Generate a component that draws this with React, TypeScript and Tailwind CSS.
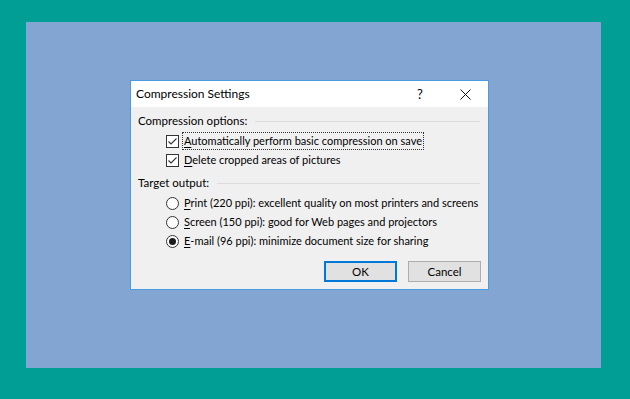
import React, { useState } from 'react';

const font = { fontFamily: 'Lato, "Noto Sans", "Liberation Sans", sans-serif' };

const Check: React.FC<{ checked: boolean }> = ({ checked }) => (
    <span className="w-[13px] h-[13px] border border-[#333] bg-white flex items-center justify-center shrink-0">
        {checked && (
            <svg width="11" height="11" viewBox="0 0 11 11">
                <path d="M1.5 5.5 L4 8 L9.5 2.5" fill="none" stroke="#333" strokeWidth="1.1" />
            </svg>
        )}
    </span>
);

const Radio: React.FC<{ checked: boolean }> = ({ checked }) => (
    <span className="w-[13px] h-[13px] rounded-full border border-[#333] bg-white flex items-center justify-center shrink-0">
        {checked && <span className="w-[7px] h-[7px] rounded-full bg-[#1a1a1a]" />}
    </span>
);

const GroupTitle: React.FC<{ label: string }> = ({ label }) => (
    <div className="flex items-center gap-[8px] pl-[7px] pr-[8px]">
        <span>{label}</span>
        <span className="flex-1 h-px bg-[#dcdcdc]" />
    </div>
);

const App: React.FC = () => {
    const [opts, setOpts] = useState({ auto: true, del: true });
    const [target, setTarget] = useState('email');

    const radios = [
        { id: 'print', key: 'P', rest: 'rint (220 ppi): excellent quality on most printers and screens' },
        { id: 'screen', key: 'S', rest: 'creen (150 ppi): good for Web pages and projectors' },
        { id: 'email', key: 'E', rest: '-mail (96 ppi): minimize document size for sharing' },
    ];

    return (
        <div className="w-[630px] h-[399px] bg-[#009e94] pt-[22px] pl-[26px]" style={font}>
            <div className="w-[575px] h-[346px] bg-[#82a5d2] pl-[104px] pt-[58px]">
                <div className="w-[359px] h-[210px] border border-[#4c9ae0] bg-[#f0f0f0] flex flex-col text-[11.5px] leading-[16px] text-black whitespace-nowrap">
                    {/* title bar */}
                    <div className="h-[26px] bg-white flex items-center shrink-0 text-[12px]">
                        <span className="pl-[5px] flex-1">Compression Settings</span>
                        <span className="w-[20px] text-center mr-[22px] text-[13px]">?</span>
                        <span className="w-[26px] flex justify-center mr-[10px]">
                            <svg width="11" height="11" viewBox="0 0 11 11">
                                <path d="M0.5 0.5 L10.5 10.5 M10.5 0.5 L0.5 10.5" stroke="#111" strokeWidth="1" />
                            </svg>
                        </span>
                    </div>

                    <div className="pt-[6px]">
                        <GroupTitle label="Compression options:" />
                        <div className="flex flex-col gap-[2px] pl-[35px] pt-[3px]">
                            <label className="flex items-center gap-[3px] cursor-default" onClick={() => setOpts(o => ({ ...o, auto: !o.auto }))}>
                                <Check checked={opts.auto} />
                                <span className="border border-dotted border-[#333] px-[1px] text-[11px]">
                                    <span className="underline underline-offset-2">A</span>utomatically perform basic compression on save
                                </span>
                            </label>
                            <label className="flex items-center gap-[3px] cursor-default text-[11px]" onClick={() => setOpts(o => ({ ...o, del: !o.del }))}>
                                <Check checked={opts.del} />
                                <span className="px-[2px]">
                                    <span className="underline underline-offset-2">D</span>elete cropped areas of pictures
                                </span>
                            </label>
                        </div>
                    </div>

                    <div className="pt-[7px]">
                        <GroupTitle label="Target output:" />
                        <div className="flex flex-col gap-[3px] pl-[35px] pt-[4px] text-[11px]">
                            {radios.map(r => (
                                <label key={r.id} className="flex items-center gap-[3px] cursor-default" onClick={() => setTarget(r.id)}>
                                    <Radio checked={target === r.id} />
                                    <span className="px-[2px]">
                                        <span className="underline underline-offset-2">{r.key}</span>{r.rest}
                                    </span>
                                </label>
                            ))}
                        </div>
                    </div>

                    <div className="flex justify-end gap-[11px] pr-[7px] pt-[12px] text-[11.5px]">
                        <button className="w-[73px] h-[21px] border-2 border-[#0078d7] bg-[#e1e1e1] flex items-center justify-center">OK</button>
                        <button className="w-[73px] h-[21px] border border-[#adadad] bg-[#e1e1e1] flex items-center justify-center">Cancel</button>
                    </div>
                </div>
            </div>
        </div>
    );
};

export default App;
